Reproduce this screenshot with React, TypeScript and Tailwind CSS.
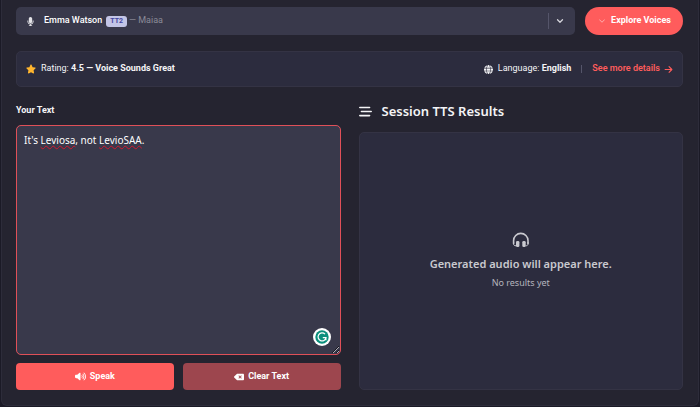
import { useState } from 'react';
import {
  FaArrowRight,
  FaBarsStaggered,
  FaDeleteLeft,
  FaGlobe,
  FaMicrophone,
  FaStar,
  FaVolumeHigh,
} from 'react-icons/fa6';
import { FiChevronDown } from 'react-icons/fi';

const voices = ['Emma Watson TT2 — Maiaa', 'David Attenborough TT2 — Zach'];

function HeadphonesIcon() {
  return (
    <svg viewBox="0 0 18 16" className="h-4 w-[18px]" fill="none" aria-hidden="true">
      <path d="M1.6 11.5V8.6a7.2 7.2 0 0 1 14.4 0v2.9" stroke="currentColor" strokeWidth="1.6" strokeLinecap="round" />
      <rect x="4" y="9" width="3.4" height="6" rx="1.3" fill="currentColor" />
      <rect x="10.3" y="9" width="3.4" height="6" rx="1.3" fill="currentColor" />
      <path d="M1.6 10v2c0 1.2.9 1.8 2.4 1.8M16 10v2c0 1.2-.9 1.8-2.4 1.8" stroke="currentColor" strokeWidth="1" />
    </svg>
  );
}

function GrammarBadge() {
  return (
    <svg viewBox="0 0 18 18" className="size-[18px]" fill="none" aria-hidden="true">
      <circle cx="9" cy="9" r="9" fill="#fff" />
      <circle cx="9" cy="9" r="6.7" fill="#0b8f7c" />
      <path d="M12 6.2A4 4 0 1 0 13 9.6H9.8M12.9 9.6v2.6" stroke="#fff" strokeWidth="1.2" />
    </svg>
  );
}

function VoicePicker() {
  return (
    <div className="relative flex h-7 flex-1 items-center rounded-[5px] bg-[#39394b] pr-2.5 pl-2.5 text-[9px] text-white">
      <FaMicrophone className="size-[9px] text-[#e4e4e8]" aria-hidden="true" />
      <span className="ml-[9px] font-medium">Emma Watson</span>
      <span className="ml-1 rounded-[3px] bg-[#c3c5e6] px-1 text-[7px] leading-[11px] font-bold text-[#4547a0]">TT2</span>
      <span className="ml-0.5 text-[#8b8b98]">— Maiaa</span>
      <span className="ml-auto h-4 w-px bg-[#55556a]" />
      <FiChevronDown className="ml-1.5 size-2.5 text-[#d6d6dc]" strokeWidth={3} aria-hidden="true" />
      <select aria-label="Voice" className="absolute inset-0 w-full cursor-pointer opacity-0">
        {voices.map((voice) => (
          <option key={voice}>{voice}</option>
        ))}
      </select>
    </div>
  );
}

function TextEditor() {
  const [text, setText] = useState("It's Leviosa, not LevioSAA.");
  const words = text.split(/(Leviosa|LevioSAA)/);
  return (
    <div className="relative font-['Noto_Sans',sans-serif]">
      <div
        aria-hidden="true"
        className="absolute inset-0 rounded-[5px] border border-transparent bg-[#39394b] px-[7px] py-1.5 text-[10px] leading-4 whitespace-pre-wrap text-transparent"
      >
        {words.map((word, i) =>
          i % 2 ? (
            <span key={i} className="underline decoration-[#d3172e] decoration-wavy decoration-1 underline-offset-1">
              {word}
            </span>
          ) : (
            word
          ),
        )}
      </div>
      <textarea
        id="tts-text"
        value={text}
        spellCheck={false}
        onChange={(e) => setText(e.target.value)}
        className="relative block h-[230px] w-full resize-y rounded-[5px] border border-[#e05058] bg-transparent px-[7px] py-1.5 text-[10px] leading-4 text-white outline-none"
      />
      <button type="button" aria-label="Check grammar" className="absolute right-2.5 bottom-[9px]">
        <GrammarBadge />
      </button>
    </div>
  );
}

export default function App() {
  return (
    <div className="min-h-screen bg-[#1b1a26] px-px pb-px font-[Roboto,'Open_Sans',sans-serif] text-[#f4f4f6]">
      <main className="rounded-b-md border-x border-b border-[#2d2c3a] bg-[#252430] pt-[7px] pr-[15px] pb-[15px] pl-3.5">
        <div className="flex gap-2.5">
          <VoicePicker />
          <button type="button" className="flex h-7 w-[98px] items-center justify-center gap-1 rounded-full bg-[#ff5c5c] text-[9px] font-bold text-white">
            <FiChevronDown className="size-2.5 opacity-60" aria-hidden="true" />
            Explore Voices
          </button>
        </div>

        <section className="mt-4 flex h-9 items-center rounded-[5px] border border-[#343344] bg-[#2c2c3e] px-[9px] text-[9px]">
          <FaStar className="size-2.5 text-[#ffb52e]" aria-hidden="true" />
          <p className="ml-[5px]">
            Rating: <span className="font-bold">4.5 — Voice Sounds Great</span>
          </p>
          <FaGlobe className="ml-auto size-[9px]" aria-hidden="true" />
          <p className="ml-[5px]">
            Language: <span className="font-bold">English</span>
          </p>
          <span className="mx-2.5 h-2 w-px bg-[#55556a]" />
          <a href="#details" className="flex items-center gap-1 font-semibold text-[#ff5c5c]">
            See more details
            <FaArrowRight className="size-[9px]" aria-hidden="true" />
          </a>
        </section>

        <div className="mt-4 grid grid-cols-2 gap-[18px]">
          <section>
            <label htmlFor="tts-text" className="mb-2 block text-[9px] leading-[14px] font-bold">
              Your Text
            </label>
            <TextEditor />
            <div className="mt-2 grid grid-cols-2 gap-[9px]">
              <button type="button" className="flex h-[27px] items-center justify-center gap-1 rounded-[4px] bg-[#ff5c5c] text-[9px] font-bold text-white">
                <FaVolumeHigh className="size-[11px]" aria-hidden="true" />
                Speak
              </button>
              <button type="button" className="flex h-[27px] items-center justify-center gap-1 rounded-[4px] bg-[#9d464e] text-[9px] font-bold text-white">
                <FaDeleteLeft className="size-2.5" aria-hidden="true" />
                Clear Text
              </button>
            </div>
          </section>

          <section className="flex flex-col font-['Noto_Sans',sans-serif]">
            <h2 className="flex items-center gap-2.5 text-[13px] leading-4 font-semibold">
              <FaBarsStaggered className="size-[13px]" aria-hidden="true" />
              Session TTS Results
            </h2>
            <div className="mt-[13px] flex flex-1 flex-col items-center justify-center rounded-[5px] border border-[#343344] bg-[#2c2c3e] text-[#c9c9cf]">
              <HeadphonesIcon />
              <p className="mt-2 text-[11px] leading-4 font-semibold">Generated audio will appear here.</p>
              <p className="mt-1 text-[9px] leading-[14px] text-[#b4b4bd]">No results yet</p>
            </div>
          </section>
        </div>
      </main>
    </div>
  );
}
